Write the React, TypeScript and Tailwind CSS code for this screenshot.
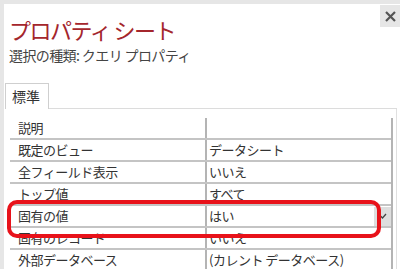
import React from "react";

interface PropRow {
    label: string;
    value: string;
    dropdown?: boolean;
}

const rows: PropRow[] = [
    { label: "説明", value: "" },
    { label: "既定のビュー", value: "データシート" },
    { label: "全フィールド表示", value: "いいえ" },
    { label: "トップ値", value: "すべて" },
    { label: "固有の値", value: "はい", dropdown: true },
    { label: "固有のレコード", value: "いいえ" },
    { label: "外部データベース", value: "(カレント データベース)" },
];

const font = { fontFamily: '"Noto Sans CJK JP", "Noto Sans", sans-serif' };

const App: React.FC = () => {
    return (
        <div className="relative w-[400px] h-[269px] overflow-hidden bg-white" style={font}>
            <div className="h-[4px] bg-[#e6e6e6]" />
            <div className="flex h-[265px]">
                <div className="w-[4px] bg-[#e6e6e6]" />
                <div className="flex-1 flex flex-col">
                    {/* header */}
                    <div className="flex justify-between">
                        <div className="pl-[5px] pt-[11px]">
                            <div className="text-[22px] leading-[28px] tracking-[-1.5px] text-[#a4262c]">
                                プロパティ シート
                            </div>
                            <div className="mt-[3px] text-[14px] leading-[18px] tracking-[-0.6px] text-[#444]">
                                選択の種類: クエリ プロパティ
                            </div>
                        </div>
                        <div className="mt-[1px] w-[20px] h-[22px] bg-[#e6e6e6] flex items-center justify-center">
                            <svg width="11" height="11" viewBox="0 0 11 11">
                                <path d="M1 1 L10 10 M10 1 L1 10" stroke="#555" strokeWidth="2.2" />
                            </svg>
                        </div>
                    </div>

                    {/* tabs */}
                    <div className="flex mt-[19px]">
                        <div className="ml-[1px] w-[44px] h-[26px] border border-b-0 border-[#cfcfcf] flex items-center pl-[6px] text-[14px] text-[#333]">
                            標準
                        </div>
                        <div className="flex-1 mr-[3px] border-b border-[#dcdcdc]" />
                    </div>

                    {/* property grid */}
                    <div className="flex-1 mr-[3px] border-r border-[#e0e0e0] pt-[9px] pl-[6px] pr-[3px]">
                        <div className="border-r-2 border-[#b4b4b4]">
                            {rows.map((row) => (
                                <div
                                    key={row.label}
                                    className="flex h-[22px] border-b-2 border-[#c4c4c4] text-[13px] tracking-[-0.5px] text-[#333]"
                                >
                                    <div className="w-[195px] pl-[8px] flex items-center">{row.label}</div>
                                    <div className="flex-1 border-l-2 border-[#b4b4b4] pl-[2px] flex items-center justify-between">
                                        <span>{row.value}</span>
                                        {row.dropdown && (
                                            <div className="w-[17px] h-[19px] bg-[#dedede] flex items-center justify-center">
                                                <svg width="9" height="6" viewBox="0 0 9 6">
                                                    <path d="M1 1.5 L4.5 5 L8 1" fill="none" stroke="#444" strokeWidth="1.3" />
                                                </svg>
                                            </div>
                                        )}
                                    </div>
                                </div>
                            ))}
                        </div>
                    </div>
                </div>
            </div>

            {/* red highlight */}
            <div className="absolute left-[7px] top-[200px] w-[374px] h-[38px] border-[4px] border-[#e8121a] rounded-[10px]" />
        </div>
    );
};

export default App;
